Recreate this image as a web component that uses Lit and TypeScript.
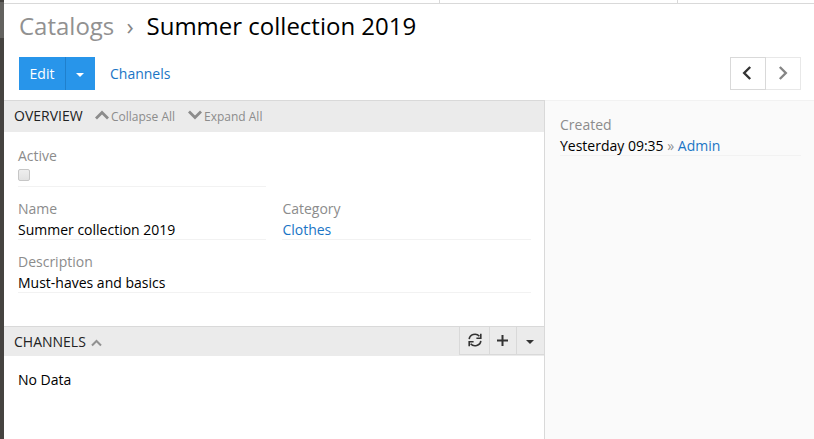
import { LitElement, html, css, svg } from "lit";
import { customElement, property } from "lit/decorators.js";

@customElement("record-field")
class RecordField extends LitElement {
  @property() label = "";
  static styles = css`
    :host { display: block; height: 43px; border-bottom: 1px solid #f2f2f2; box-sizing: border-box; padding-top: 2px; }
    .label { color: #8c8c8c; line-height: 20px; height: 21px; }
    .value { color: #000; line-height: 20px; height: 19px; white-space: nowrap; }
  `;
  render() {
    return html`<div class="label">${this.label}</div><div class="value"><slot></slot></div>`;
  }
}

const caret = html`<svg width="8" height="4" viewBox="0 0 8 4"><path fill="currentColor" d="M0 0h8L4 4z"/></svg>`;
const chevron = (d: string, w: number, h: number, sw: number) =>
  html`<svg width=${w} height=${h} viewBox="0 0 ${w} ${h}">${svg`<path d=${d} fill="none" stroke="currentColor" stroke-width=${sw}/>`}</svg>`;

@customElement("app-root")
class AppRoot extends LitElement {
  static styles = css`
    :host {
      display: flex; width: 814px; height: 439px; overflow: hidden; background: #fff;
      font: 14px/20px "Open Sans", sans-serif; color: #000;
    }
    svg { display: block; flex: none; }
    .rail { width: 4px; flex: none; background: #454340; display: flex; flex-direction: column; }
    .rail-item { height: 36px; margin-top: 2px; background: #63625f; }
    .page { flex: 1; min-width: 0; display: flex; flex-direction: column; }
    .nav { height: 3px; border-bottom: 1px solid #d9d9d9; display: flex; }
    .nav-left { width: 435px; border-right: 1px solid #d9d9d9; }
    .nav-mid { width: 237px; border-right: 1px solid #d9d9d9; }
    .title { margin: 0 0 0 15px; height: 53px; display: flex; font-weight: 400; font-size: 24px; line-height: 43px; white-space: pre; }
    .crumb { color: #919191; width: 107.5px; }
    .sep { color: #868686; width: 20px; }
    .toolbar { height: 43px; padding: 0 13px 0 15px; display: flex; align-items: flex-start; }
    .primary { display: flex; height: 33px; width: 76px; background: #2895ea; color: #fff; }
    .edit { width: 46px; line-height: 34px; text-align: center; border-right: 1px solid #1f80cd; }
    .drop { flex: 1; display: flex; align-items: center; padding: 3px 0 0 10px; }
    .link { color: #1a75c5; }
    .tab { margin-left: 15px; line-height: 34px; flex: 1; }
    .pager { display: flex; }
    .page-btn { box-sizing: border-box; height: 33px; width: 36px; border: 1px solid #d9d9d9; display: flex; align-items: center; justify-content: center; color: #333; padding: 0 2px 2px 0; }
    .off { width: 35px; border-color: #e8e8e8; border-left: 0; color: #858585; padding-right: 0; }
    .body { flex: 1; display: flex; }
    .main { width: 540px; border-right: 1px solid #d9d9d9; }
    .bar { box-sizing: border-box; border-top: 1px solid #d9d9d9; background: #ebebeb; display: flex; align-items: center; padding-left: 10px; color: #333; }
    .overview { height: 32px; padding-bottom: 2px; }
    .heading { width: 81px; color: #222; }
    .action { display: flex; align-items: center; color: #8c8c8c; font-size: 12px; white-space: nowrap; }
    .collapse { width: 93px; }
    .action span { margin-left: 2px; padding-top: 2px; }
    .fields { height: 194px; box-sizing: border-box; padding: 12px 0 0 14px; display: grid; grid-template-columns: 248.4px 248.4px; grid-auto-rows: 43px; gap: 10px 16px; }
    .wide { grid-column: 1 / -1; }
    .check { box-sizing: border-box; width: 12px; height: 12px; margin-top: 2px; border: 1px solid #c6c6c6; border-radius: 2px; background: linear-gradient(#eee, #e2e2e2); }
    .channels { height: 30px; align-items: flex-start; }
    .channels .ch-title { line-height: 30px; width: 77px; color: #222; }
    .up { color: #919191; padding-top: 12px; flex: 1; }
    .tools { display: flex; border-left: 1px solid #d9d9d9; border-bottom: 1px solid #d9d9d9; height: 27px; }
    .tool { box-sizing: border-box; display: flex; align-items: center; justify-content: center; color: #333; }
    .tool + .tool { border-left: 1px solid #d9d9d9; }
    .refresh { width: 29px; padding: 0 0 1px 1px; }
    .plus { width: 27px; padding-right: 1px; }
    .more { width: 28px; padding: 3px 1px 0 0; }
    .empty { padding: 14px; }
    .side { flex: 1; background: #fafafa; border-top: 1px solid #f2f2f2; padding: 12px 13px 0 15px; }
    .muted { color: #919191; }
  `;

  render() {
    return html`
      <div class="rail"><div class="rail-item"></div></div>
      <div class="page">
        <div class="nav"><div class="nav-left"></div><div class="nav-mid"></div></div>
        <h3 class="title"><span class="crumb">Catalogs</span><span class="sep">›</span><span>Summer collection 2019</span></h3>
        <div class="toolbar">
          <div class="primary"><div class="edit">Edit</div><div class="drop">${caret}</div></div>
          <a class="link tab">Channels</a>
          <div class="pager">
            <div class="page-btn">${chevron("M8.2 1L2.2 7L8.2 13", 10, 14, 2.4)}</div>
            <div class="page-btn off">${chevron("M1.8 1L7.8 7L1.8 13", 10, 14, 2.4)}</div>
          </div>
        </div>
        <div class="body">
          <div class="main">
            <div class="bar overview">
              <span class="heading">OVERVIEW</span>
              <div class="action collapse">${chevron("M1 8.5L7 2.5L13 8.5", 14, 11, 2.8)}<span>Collapse All</span></div>
              <div class="action">${chevron("M1 1.5L7 7.5L13 1.5", 14, 11, 2.8)}<span>Expand All</span></div>
            </div>
            <div class="fields">
              <record-field label="Active"><div class="check"></div></record-field><div></div>
              <record-field label="Name">Summer collection 2019</record-field>
              <record-field label="Category"><a class="link">Clothes</a></record-field>
              <record-field class="wide" label="Description">Must-haves and basics</record-field>
            </div>
            <div class="bar channels">
              <span class="ch-title">CHANNELS</span>
              <div class="up">${chevron("M1 6.5L5.5 2L10 6.5", 11, 8, 2)}</div>
              <div class="tools">
                <div class="tool refresh"><svg width="14" height="14" viewBox="0 0 14 14"><g fill="none" stroke="currentColor" stroke-width="1.6"><path d="M1.2 6.2A5.8 5.4 0 0 1 11.4 3.2"/><path d="M12.8 7.8A5.8 5.4 0 0 1 2.6 10.8"/><path d="M12.8.8v4.4H8.4M1.2 13.2V8.8h4.4"/></g></svg></div>
                <div class="tool plus"><svg width="11" height="11" viewBox="0 0 11 11"><path fill="currentColor" d="M4.5 0h2v4.5H11v2H6.5V11h-2V6.5H0v-2h4.5z"/></svg></div>
                <div class="tool more">${caret}</div>
              </div>
            </div>
            <div class="empty">No Data</div>
          </div>
          <div class="side">
            <record-field label="Created">Yesterday 09:35 <span class="muted">»</span> <a class="link">Admin</a></record-field>
          </div>
        </div>
      </div>`;
  }
}
